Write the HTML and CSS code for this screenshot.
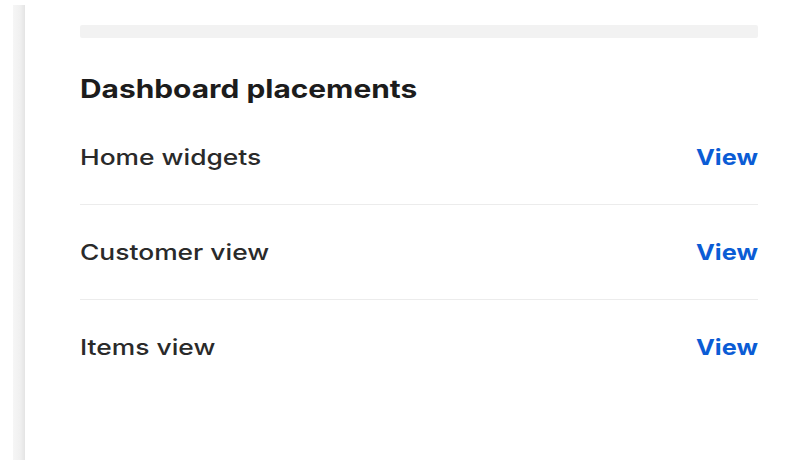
FILE: index.html
```html
<!DOCTYPE html>
<html lang="en">
<head>
<meta charset="utf-8">
<title>Dashboard placements</title>
<link rel="stylesheet" href="styles.css">
</head>
<body>
<div class="layout">
  <div class="rail"></div>
  <main class="content">
    <div class="skeleton-bar"></div>
    <h2 class="section-title"><span class="wide">Dashboard placements</span></h2>
    <ul class="placements">
      <li class="placement"><span class="placement-name">Home widgets</span><a class="placement-link" href="#">View</a></li>
      <li class="placement"><span class="placement-name">Customer view</span><a class="placement-link" href="#">View</a></li>
      <li class="placement"><span class="placement-name">Items view</span><a class="placement-link" href="#">View</a></li>
    </ul>
  </main>
</div>
</body>
</html>
```

FILE: styles.css
```css
html, body {
  margin: 0;
  padding: 0;
  background: #ffffff;
}

body {
  font-family: Inter, "Noto Sans", "Liberation Sans", sans-serif;
  color: #1f1f1f;
}

.layout {
  display: flex;
  height: 464px;
  box-sizing: border-box;
  padding: 5px 0 4px 13px;
}

.rail {
  width: 12px;
  flex: 0 0 12px;
  background: linear-gradient(to right, #f6f6f6 0%, #f0f0f0 60%, #e4e4e4 100%);
}

.content {
  flex: 1;
  padding: 20px 33px 0 55px;
}

.skeleton-bar {
  height: 13px;
  background: #f2f2f2;
  border-radius: 2px;
}

.section-title {
  margin: 36px 0 6px;
  font-size: 25.5px;
  line-height: 30px;
  font-weight: 700;
  color: #1c1c1c;
}

.wide {
  display: inline-block;
  transform: scaleX(1.172);
  transform-origin: left center;
}

.placements {
  list-style: none;
  margin: 0;
  padding: 0;
}

.placement {
  display: flex;
  align-items: center;
  justify-content: space-between;
  height: 94px;
  border-bottom: 1px solid #ececec;
  font-size: 22px;
}

.placement:last-child {
  border-bottom: none;
}

.placement-name {
  display: inline-block;
  color: #2a2a2a;
  font-weight: 500;
  transform: scaleX(1.2);
  transform-origin: left center;
}

.placement-link {
  display: inline-block;
  color: #0b5cd5;
  font-weight: 700;
  text-decoration: none;
  transform: scaleX(1.15);
  transform-origin: right center;
}
```
